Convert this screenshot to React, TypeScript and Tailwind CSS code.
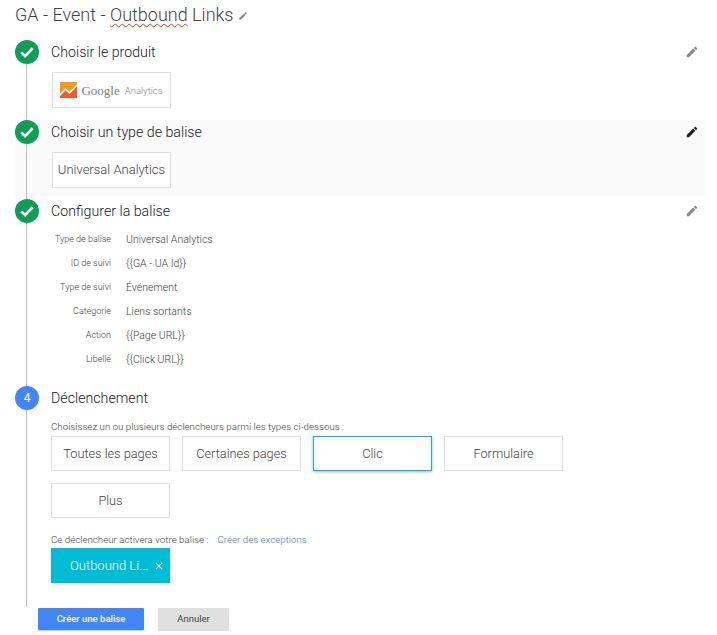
import type { ReactNode } from 'react';

const ROBOTO = 'font-[Roboto,sans-serif]';

const DETAILS = [
  ['Type de balise', 'Universal Analytics'],
  ['ID de suivi', '{{GA - UA Id}}'],
  ['Type de suivi', 'Événement'],
  ['Catégorie', 'Liens sortants'],
  ['Action', '{{Page URL}}'],
  ['Libellé', '{{Click URL}}'],
];

const EDIT_PATH =
  'M3 17.25V21h3.75L17.81 9.94l-3.75-3.75L3 17.25zM20.71 7.04c.39-.39.39-1.02 0-1.41l-2.34-2.34c-.39-.39-1.02-.39-1.41 0l-1.83 1.83 3.75 3.75 1.83-1.83z';

function Pencil({ className }: { className: string }) {
  return (
    <svg viewBox="0 0 24 24" className={className} fill="currentColor">
      <path d={EDIT_PATH} />
    </svg>
  );
}

function Badge({ done, label }: { done: boolean; label?: string }) {
  return (
    <div
      className={`flex h-6 w-6 shrink-0 items-center justify-center rounded-full text-[12px] text-white ${
        done ? 'bg-[#0f9d58]' : 'bg-[#4285f4]'
      }`}
    >
      {done ? (
        <svg viewBox="0 0 24 24" className="h-[18px] w-[18px]" fill="none" stroke="currentColor" strokeWidth="3.6">
          <path d="M4.5 12.5l5 5L19.5 7" />
        </svg>
      ) : (
        label
      )}
    </div>
  );
}

interface StepProps {
  title: string;
  done?: boolean;
  label?: string;
  editColor?: string;
  className?: string;
  bodyClassName?: string;
  lineClassName?: string;
  children: ReactNode;
}

function Step({ title, done = true, label, editColor, className = '', bodyClassName = '', lineClassName = '', children }: StepProps) {
  return (
    <section className={`flex gap-3 ${className}`}>
      <div className="flex w-6 shrink-0 flex-col">
        <Badge done={done} label={label} />
        <div className={`ml-[11px] w-px flex-1 bg-[#bdbdbd] ${lineClassName}`} />
      </div>
      <div className={`min-w-0 flex-1 ${bodyClassName}`}>
        <div className="flex h-6 items-center justify-between">
          <h2 className="text-[14.2px] leading-6 font-light text-[#212121]">{title}</h2>
          {editColor && <Pencil className={`mr-[6px] h-[14px] w-[14px] ${editColor}`} />}
        </div>
        {children}
      </div>
    </section>
  );
}

function Card({ children }: { children: ReactNode }) {
  return (
    <div className="mt-2 ml-px flex h-9 w-[119px] items-center justify-center border border-[#e0e0e0] bg-white">
      {children}
    </div>
  );
}

function GoogleAnalyticsLogo() {
  return (
    <div className="flex items-center">
      <svg viewBox="0 0 17 16" className="h-4 w-[17px]">
        <rect width="17" height="16" fill="#f7981d" />
        <path d="M0 16V11.5L5.5 6l4 3.5L17 2v14z" fill="#f15a29" />
        <path d="M0 11.5L5.5 6l4 3.5L17 2v2.5L9.5 12l-4-3.5L0 14z" fill="#fff" />
      </svg>
      <span className="ml-[4px] font-['Liberation_Serif',serif] text-[13px] leading-none text-[#808080]">Google</span>
      <span className="mt-[2px] ml-[5px] text-[9.5px] leading-none font-light text-[#8a8a8a]">Analytics</span>
    </div>
  );
}

function TriggerType({ label, active = false }: { label: string; active?: boolean }) {
  return (
    <button
      className={`h-[35px] w-[119px] border text-[12.75px] font-light text-[#424242] ${
        active ? 'border-[#00bcd4] shadow-[0_1px_3px_rgba(0,0,0,0.3)]' : 'border-[#e0e0e0]'
      }`}
    >
      {label}
    </button>
  );
}

export default function App() {
  return (
    <div className={`${ROBOTO} h-[635px] w-[717px] overflow-hidden bg-white pt-[3px] pr-3 pl-[15px]`}>
      <div className="flex h-[37px] items-start">
        <h1 className="text-[18px] leading-[24px] font-light text-[#424242]">
          GA - Event -{' '}
          <span className="underline decoration-[#e53935] decoration-wavy decoration-1 underline-offset-2">Outbound</span>{' '}
          Links
        </h1>
        <Pencil className="mt-[8px] ml-[4px] h-[10px] w-[10px] text-[#8a8a8a]" />
      </div>

      <Step title="Choisir le produit" editColor="text-[#8a8a8a]" bodyClassName="pb-3">
        <Card>
          <GoogleAnalyticsLogo />
        </Card>
      </Step>

      <Step
        title="Choisir un type de balise"
        editColor="text-[#212121]"
        className="mb-[3px] bg-[#fafafa]"
        bodyClassName="pb-2"
        lineClassName="-mb-[3px]"
      >
        <Card>
          <span className="text-[13px] font-light text-[#424242]">Universal Analytics</span>
        </Card>
      </Step>

      <Step title="Configurer la balise" editColor="text-[#8a8a8a]" bodyClassName="pb-[14px]">
        <dl className="mt-[5px]">
          {DETAILS.map(([name, value]) => (
            <div key={name} className="flex h-6 items-center">
              <dt className="w-[60px] shrink-0 text-right text-[9px] font-light text-[#424242]">{name}</dt>
              <dd className="ml-[15px] text-[10.5px] font-light text-[#424242]">{value}</dd>
            </div>
          ))}
        </dl>
      </Step>

      <Step title="Déclenchement" done={false} label="4" bodyClassName="pb-6">
        <p className="mt-[9px] h-4 text-[9.75px] leading-4 font-light text-[#424242]">
          Choisissez un ou plusieurs déclencheurs parmi les types ci-dessous :
        </p>
        <div className="mt-px flex w-[640px] flex-wrap gap-3">
          <TriggerType label="Toutes les pages" />
          <TriggerType label="Certaines pages" />
          <TriggerType label="Clic" active />
          <TriggerType label="Formulaire" />
          <TriggerType label="Plus" />
        </div>
        <p className="mt-[14px] flex h-4 text-[9.75px] leading-4 font-light text-[#424242]">
          <span>Ce déclencheur activera votre balise :</span>
          <a className="ml-[9px] text-[#5c6bc0]">Créer des exceptions</a>
        </p>
        <div className="flex h-[35px] w-[119px] items-center bg-[#00bcd4] pl-[19px] text-[13px] font-light text-white">
          <span>Outbound Li...</span>
          <svg viewBox="0 0 10 10" className="ml-[7px] h-2 w-2" stroke="currentColor" strokeWidth="1.4">
            <path d="M1 1l8 8M9 1l-8 8" />
          </svg>
        </div>
      </Step>

      <div className="mt-px ml-[23px] flex gap-[14px]">
        <button className="h-[22px] w-[106px] rounded-[1px] bg-[#4285f4] text-[9.5px] font-medium text-white shadow-[0_1px_1px_rgba(0,0,0,0.2)]">
          Créer une balise
        </button>
        <button className="h-[22px] w-[71px] rounded-[1px] bg-[#e0e0e0] text-[9.5px] font-normal text-[#424242] shadow-[0_1px_1px_rgba(0,0,0,0.15)]">
          Annuler
        </button>
      </div>
    </div>
  );
}
